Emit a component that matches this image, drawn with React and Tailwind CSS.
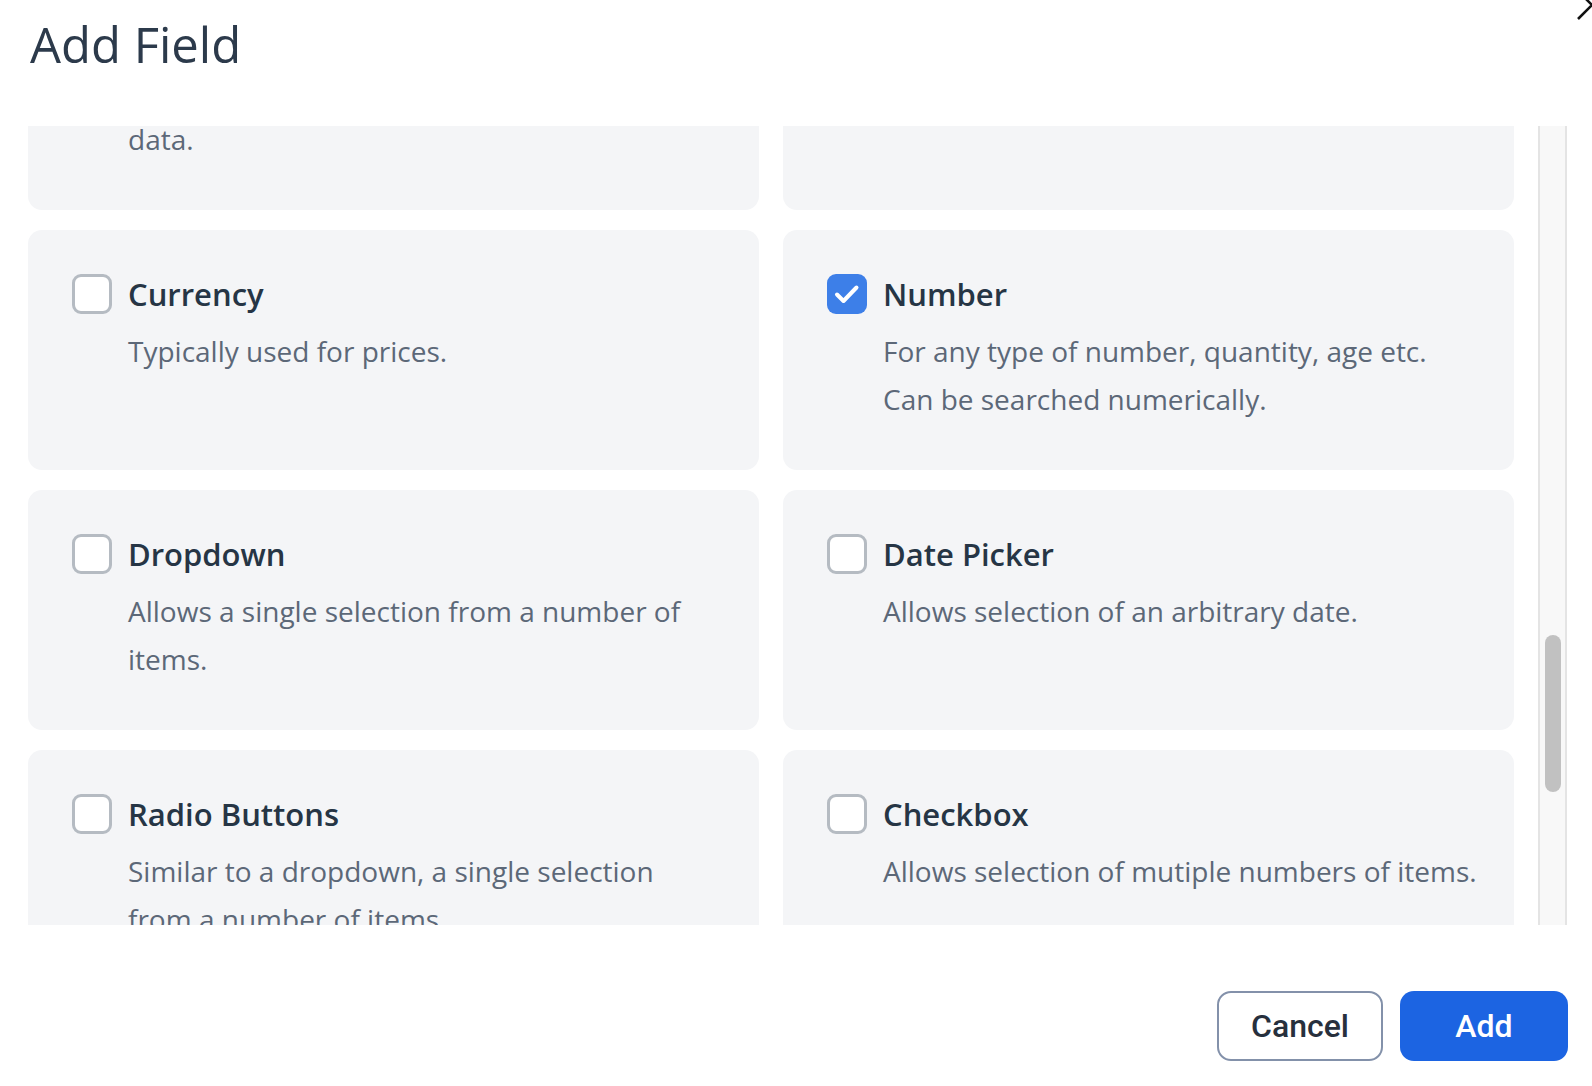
import { useState } from "react";

const fieldTypes = [
  { id: "text", title: "Text", lines: ["A single line of text for short pieces of", "data."] },
  { id: "paragraph", title: "Paragraph", lines: ["Multiple lines of text."] },
  { id: "currency", title: "Currency", lines: ["Typically used for prices."] },
  {
    id: "number",
    title: "Number",
    lines: ["For any type of number, quantity, age etc.", "Can be searched numerically."],
  },
  {
    id: "dropdown",
    title: "Dropdown",
    lines: ["Allows a single selection from a number of", "items."],
  },
  { id: "date", title: "Date Picker", lines: ["Allows selection of an arbitrary date."] },
  {
    id: "radio",
    title: "Radio Buttons",
    lines: ["Similar to a dropdown, a single selection", "from a number of items."],
  },
  { id: "checkbox", title: "Checkbox", lines: ["Allows selection of mutiple numbers of items."] },
];

function Check({ checked }) {
  if (checked) {
    return (
      <div className="w-[40px] h-[40px] shrink-0 rounded-[9px] bg-[#3d7fe8] flex items-center justify-center">
        <svg width="40" height="40" viewBox="0 0 40 40" fill="none">
          <path
            d="M10 20.5l6.5 6.5L29.5 13.5"
            stroke="white"
            strokeWidth="4"
            strokeLinecap="round"
            strokeLinejoin="round"
          />
        </svg>
      </div>
    );
  }
  return (
    <div className="w-[40px] h-[40px] shrink-0 rounded-[9px] border-[3px] border-[#b5bbc2] bg-white" />
  );
}

function FieldCard({ field, checked, onToggle }) {
  return (
    <div
      onClick={onToggle}
      className="h-[240px] rounded-[14px] bg-[#f4f5f7] p-[44px] cursor-pointer">
      <div className="flex items-center gap-[16px] h-[40px]">
        <Check checked={checked} />
        <span className="text-[31px] leading-[40px] font-semibold text-[#263545]">
          {field.title}
        </span>
      </div>
      <div className="mt-[13px] pl-[56px] text-[28px] leading-[48px] text-[#5c6878]">
        {field.lines.map((line) => (
          <div key={line} className="whitespace-nowrap">
            {line}
          </div>
        ))}
      </div>
    </div>
  );
}

export default function App() {
  const [selected, setSelected] = useState("number");

  return (
    <div className="relative h-[1086px] w-full overflow-hidden bg-white flex flex-col font-['Open_Sans',sans-serif]">
      {/* close button, mostly off the right edge */}
      <button className="absolute left-[1576px] top-[-11px] w-[32px] h-[32px]">
        <svg width="32" height="32" viewBox="0 0 32 32" fill="none">
          <path d="M2 2L30 30M30 2L2 30" stroke="#111" strokeWidth="2.6" />
        </svg>
      </button>

      <div className="h-[126px] shrink-0 pl-[30px] pt-[20px]">
        <h1 className="text-[49px] leading-[48px] font-normal text-[#2c3a4b]">Add Field</h1>
      </div>

      <div className="h-[799px] shrink-0 flex pl-[28px] pr-[25px]">
        <div className="flex-1 overflow-hidden">
          <div className="grid grid-cols-2 gap-x-[24px] gap-y-[20px] -mt-[156px]">
            {fieldTypes.map((f) => (
              <FieldCard
                key={f.id}
                field={f}
                checked={selected === f.id}
                onToggle={() => setSelected(f.id)}
              />
            ))}
          </div>
        </div>
        {/* scrollbar */}
        <div className="ml-[24px] w-[29px] h-full border-x-2 border-[#e4e4e4] bg-[#f8f8f8]">
          <div className="mt-[509px] mx-auto w-[16px] h-[157px] rounded-full bg-[#c1c1c1]" />
        </div>
      </div>

      <div className="flex justify-end gap-[17px] pt-[66px] pr-[24px] font-['Roboto',sans-serif]">
        <button className="w-[166px] h-[70px] rounded-[14px] border-2 border-[#8391aa] bg-white text-[32px] font-medium text-[#27303d]">
          Cancel
        </button>
        <button className="w-[168px] h-[70px] rounded-[14px] bg-[#1c64e2] text-[32px] font-medium text-white">
          Add
        </button>
      </div>
    </div>
  );
}
